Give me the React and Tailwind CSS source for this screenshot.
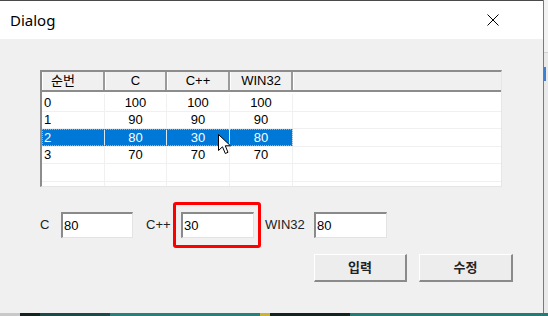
import React from "react";

const cols = [
  { label: "순번", w: "w-[63px]", align: "justify-start pl-[2px]" },
  { label: "C", w: "w-[62px]", align: "justify-center" },
  { label: "C++", w: "w-[63px]", align: "justify-center" },
  { label: "WIN32", w: "w-[63px]", align: "justify-center" },
];

const rows = [
  ["0", "100", "100", "100"],
  ["1", "90", "90", "90"],
  ["2", "80", "30", "80"],
  ["3", "70", "70", "70"],
  ["", "", "", ""],
  ["", "", "", ""],
];

const font = { fontFamily: '"Liberation Sans", "Noto Sans CJK KR", sans-serif' };

const Edit = ({ value, w }) => (
  <div
    className={`${w} h-[26px] bg-white border-t-2 border-l-2 border-t-[#8a8a8a] border-l-[#8a8a8a] border-b border-r border-b-[#e3e3e3] border-r-[#e3e3e3] flex items-center pl-[1px] text-[13px] text-black`}
  >
    {value}
  </div>
);

const Button = ({ children, w }) => (
  <div
    className={`${w} h-[28px] bg-[#ededed] border-t border-l border-t-white border-l-white border-b-2 border-r-2 border-b-[#8a8a8a] border-r-[#8a8a8a] flex items-center justify-center text-[13px] font-semibold text-[#222]`}
  >
    {children}
  </div>
);

const Cursor = () => (
  <svg className="absolute left-[218px] top-[134px]" width="14" height="22" viewBox="0 0 14 22">
    <path
      d="M0.5 0.5 L0.5 16.5 L4.5 12.8 L7.3 19.5 L10 18.3 L7.3 11.8 L12.5 11.8 Z"
      fill="white"
      stroke="black"
      strokeWidth="1"
      strokeLinejoin="miter"
    />
  </svg>
);

export default function App() {
  return (
    <div className="w-[548px] h-[316px] bg-[#1a2624] overflow-hidden relative" style={font}>
      <div className="flex h-[313px]">
        <div className="w-[543px] h-full flex flex-col border-t border-[#4a4a4a]">
          {/* title bar */}
          <div className="h-[38px] bg-white flex items-center justify-between pl-[10px] pr-[44px]">
            <span
              className="text-[15px] text-black"
              style={{ fontFamily: '"Segoe UI", "Noto Sans", "Open Sans", sans-serif' }}
            >
              Dialog
            </span>
            <svg width="12" height="12" viewBox="0 0 12 12">
              <path d="M0.5 0.5 L11.5 11.5 M11.5 0.5 L0.5 11.5" stroke="black" strokeWidth="1" />
            </svg>
          </div>

          {/* body */}
          <div className="flex-1 bg-[#f0f0f0] pt-[31px] pl-[40px] relative">
            {/* list control */}
            <div className="w-[462px] h-[117px] bg-white border-t-2 border-l-2 border-t-[#8c8c8c] border-l-[#8c8c8c] border-r border-b border-r-[#e6e6e6] border-b-[#e6e6e6] overflow-hidden text-[13px]">
              <div className="flex h-[20px] bg-[#f0f0f0] border-b-2 border-[#8c8c8c]">
                {cols.map((c) => (
                  <div
                    key={c.label}
                    className={`${c.w} h-full flex items-center ${c.label === "순번" ? "justify-start pl-[8px]" : "justify-center"} border-r-2 border-r-[#9a9a9a] border-l border-l-white text-black font-normal`}
                  >
                    {c.label}
                  </div>
                ))}
                <div className="flex-1 border-l border-l-white" />
              </div>
              <div className="pt-[2px]">
                {rows.map((r, i) => {
                  const sel = i === 2;
                  return (
                    <div key={i} className="flex h-[17.5px] border-b border-[#f0f0f0]">
                      <div
                        className={`flex ${sel ? "bg-[#0078d7] text-white outline outline-1 outline-dotted outline-[#e8a060] -outline-offset-1" : "text-black"}`}
                      >
                        {r.map((v, j) => (
                          <div
                            key={j}
                            className={`${cols[j].w} h-full flex items-center ${cols[j].align} border-r ${sel ? "border-[#d8e8f8]" : "border-[#f0f0f0]"}`}
                          >
                            {v}
                          </div>
                        ))}
                      </div>
                      <div className="flex-1" />
                    </div>
                  );
                })}
              </div>
            </div>

            {/* edit row */}
            <div className="flex items-center mt-[15px] h-[46px] text-[13px] text-[#222]">
              <span className="w-[21px]">C</span>
              <Edit value="80" w="w-[72px]" />
              <span className="ml-[13px] w-[27px]">C++</span>
              <div className="w-[88px] h-[46px] border-[3px] border-[#ff0000] rounded-[3px] pl-[5px] pt-[7px]">
                <Edit value="30" w="w-[73px]" />
              </div>
              <span className="ml-[4px] w-[49px]">WIN32</span>
              <Edit value="80" w="w-[73px]" />
            </div>

            {/* buttons */}
            <div className="flex gap-[12px] mt-[6px] pl-[274px]">
              <Button w="w-[93px]">입력</Button>
              <Button w="w-[94px]">수정</Button>
            </div>

            <div className="absolute left-0 top-[-39px]">
              <Cursor />
            </div>
          </div>
        </div>
        {/* neighbouring window edge */}
        <div className="flex-1 border-l border-[#7a7a7a] bg-[#e9e9e9] flex flex-col">
          <div className="h-[53px] bg-[#f2f2f2] border-b border-[#d0d0d0]" />
          <div className="h-[14px] mt-[14px] border-l-2 border-[#3d7fd0]" />
        </div>
      </div>
      {/* desktop strip */}
      <div className="flex h-[3px]">
        <div className="w-[20px] bg-[#c8c8c8]" />
        <div className="w-[20px] bg-[#142220]" />
        <div className="w-[70px] bg-[#1d4a48]" />
        <div className="w-[150px] bg-[#2a7f7a]" />
        <div className="w-[10px] bg-[#c9b43a]" />
        <div className="w-[80px] bg-[#142220]" />
        <div className="flex-1 bg-[#267a75]" />
      </div>
    </div>
  );
}
